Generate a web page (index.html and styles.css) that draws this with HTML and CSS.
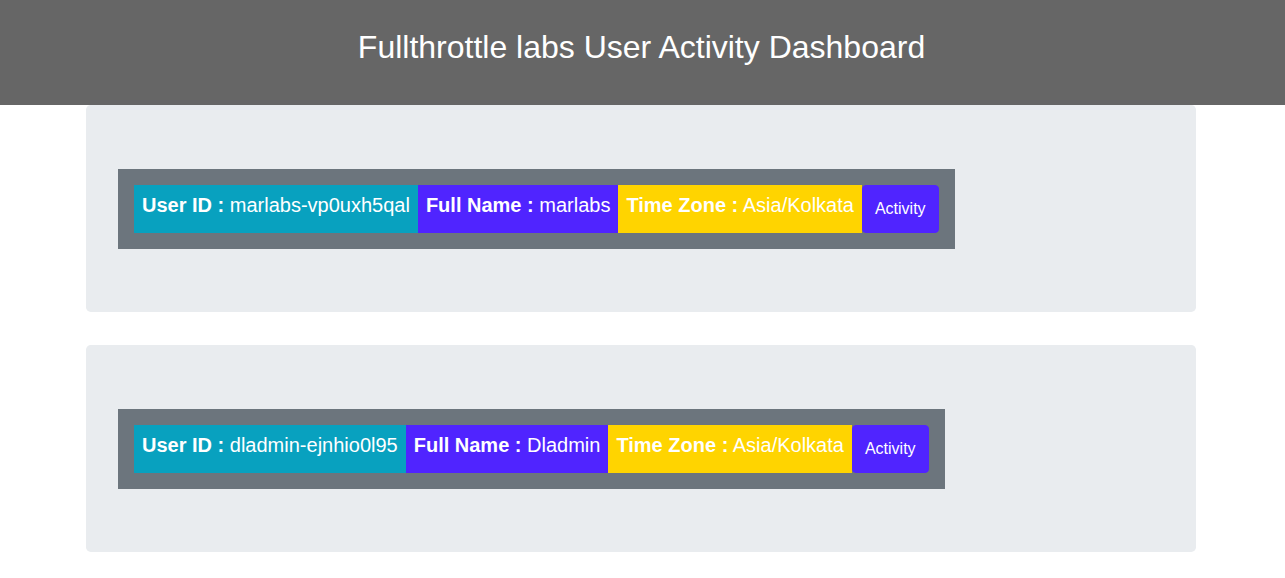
FILE: index.html
```html
<!DOCTYPE html>
<html lang="en">
<head>
<meta charset="utf-8">
<title>Fullthrottle labs User Activity Dashboard</title>
<link rel="stylesheet" href="styles.css">
</head>
<body>
<header class="topbar">
  <h2 class="title">Fullthrottle labs User Activity Dashboard</h2>
</header>
<main class="container">
  <section class="jumbo">
    <div class="user-row">
      <div class="cell cell-id"><h5 class="field"><b>User ID :</b> marlabs-vp0uxh5qal</h5></div>
      <div class="cell cell-name"><h5 class="field"><b>Full Name :</b> marlabs</h5></div>
      <div class="cell cell-tz"><h5 class="field"><b>Time Zone :</b> Asia/Kolkata</h5></div>
      <button class="btn-activity" type="button">Activity</button>
    </div>
  </section>
  <section class="jumbo">
    <div class="user-row">
      <div class="cell cell-id"><h5 class="field"><b>User ID :</b> dladmin-ejnhio0l95</h5></div>
      <div class="cell cell-name"><h5 class="field"><b>Full Name :</b> Dladmin</h5></div>
      <div class="cell cell-tz"><h5 class="field"><b>Time Zone :</b> Asia/Kolkata</h5></div>
      <button class="btn-activity" type="button">Activity</button>
    </div>
  </section>
</main>
</body>
</html>
```
FILE: styles.css
```css
* { box-sizing: border-box; }
html, body {
  margin: 0;
  padding: 0;
  background: #ffffff;
  font-family: "Liberation Sans", Arial, sans-serif;
  color: #212529;
}
.topbar {
  background: #666666;
  height: 105px;
  padding-top: 28px;
  text-align: center;
}
.title {
  margin: 0 0 0 -2px;
  font-size: 32px;
  line-height: 1.2;
  font-weight: 400;
  color: #ffffff;
}
.container {
  width: 1140px;
  margin-left: calc(50% - 571.5px);
  padding: 0 15px;
}
.jumbo {
  background: #e9ecef;
  border-radius: 4.8px;
  padding: 64px 32px 63px 32px;
  margin-bottom: 33px;
  display: flex;
}
.user-row {
  background: #6c757d;
  padding: 16px;
  display: flex;
  align-items: stretch;
}
.cell {
  padding: 8px;
  color: #ffffff;
}
.cell-id { background: #08a1bf; }
.cell-name { background: #5024ff; }
.cell-tz { background: #ffd400; }
.field {
  margin: 0 0 8px 0;
  font-size: 20px;
  line-height: 1.2;
  font-weight: 400;
  white-space: nowrap;
}
.field b { font-weight: 700; }
.btn-activity {
  background: #5024ff;
  color: #ffffff;
  border: 1px solid #5024ff;
  border-radius: 4px;
  font-family: "Liberation Sans", Arial, sans-serif;
  font-size: 16px;
  line-height: 1.5;
  padding: 6px 12px;
  display: flex;
  align-items: center;
  cursor: pointer;
}
```
